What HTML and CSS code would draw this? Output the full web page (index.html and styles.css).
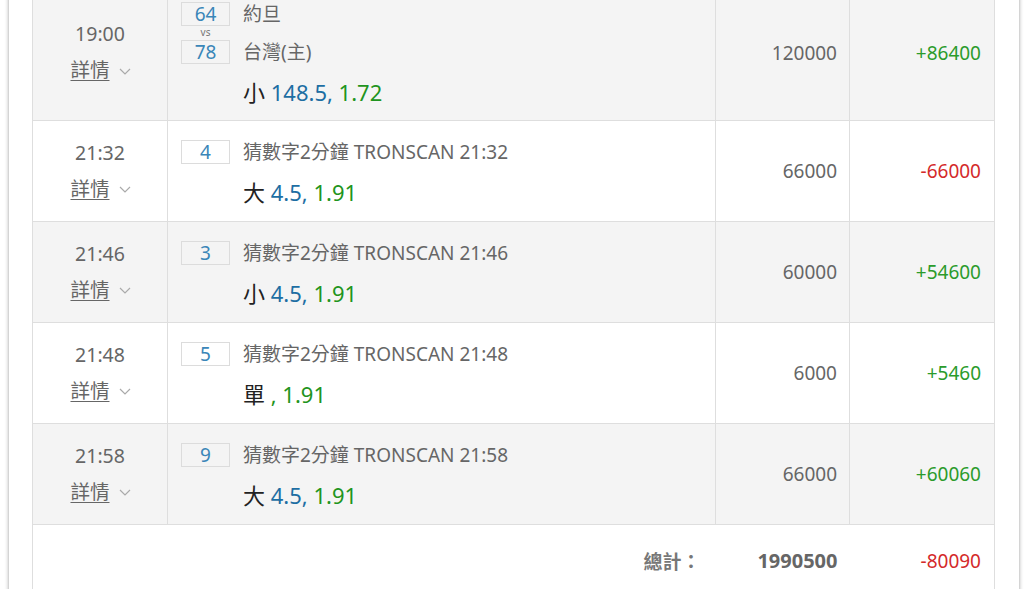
FILE: index.html
```html
<!DOCTYPE html>
<html>
<head>
  <meta charset='UTF-8'>
  <title>投注紀錄</title>
  <link rel="stylesheet" href="styles.css">
</head>
<body>
<div class="panel">
  <table class="bets">
    <colgroup>
      <col class="c-time"><col class="c-match"><col class="c-amount"><col class="c-win">
    </colgroup>
    <tr class="odd tall">
      <td class="time">
        <div class="clock">19:00</div>
        <div class="more"><a>詳情</a><svg width="12" height="7" viewBox="0 0 12 7"><path d="M1 1l5 5 5-5" fill="none" stroke="#aaa" stroke-width="1.2"/></svg></div>
      </td>
      <td class="match">
        <div class="grid">
          <div class="score">64</div><div class="team">約旦</div>
          <div class="vs">vs</div><div></div>
          <div class="score">78</div><div class="team">台灣(主)</div>
          <div></div><div class="pick">小 <span class="line">148.5,</span> <span class="odds">1.72</span></div>
        </div>
      </td>
      <td class="amount">120000</td>
      <td class="win plus">+86400</td>
    </tr>
    <tr>
      <td class="time">
        <div class="clock">21:32</div>
        <div class="more"><a>詳情</a><svg width="12" height="7" viewBox="0 0 12 7"><path d="M1 1l5 5 5-5" fill="none" stroke="#aaa" stroke-width="1.2"/></svg></div>
      </td>
      <td class="match">
        <div class="grid">
          <div class="score">4</div><div class="team">猜數字2分鐘 TRONSCAN 21:32</div>
          <div></div><div class="pick">大 <span class="line">4.5,</span> <span class="odds">1.91</span></div>
        </div>
      </td>
      <td class="amount">66000</td>
      <td class="win minus">-66000</td>
    </tr>
    <tr class="odd">
      <td class="time">
        <div class="clock">21:46</div>
        <div class="more"><a>詳情</a><svg width="12" height="7" viewBox="0 0 12 7"><path d="M1 1l5 5 5-5" fill="none" stroke="#aaa" stroke-width="1.2"/></svg></div>
      </td>
      <td class="match">
        <div class="grid">
          <div class="score">3</div><div class="team">猜數字2分鐘 TRONSCAN 21:46</div>
          <div></div><div class="pick">小 <span class="line">4.5,</span> <span class="odds">1.91</span></div>
        </div>
      </td>
      <td class="amount">60000</td>
      <td class="win plus">+54600</td>
    </tr>
    <tr>
      <td class="time">
        <div class="clock">21:48</div>
        <div class="more"><a>詳情</a><svg width="12" height="7" viewBox="0 0 12 7"><path d="M1 1l5 5 5-5" fill="none" stroke="#aaa" stroke-width="1.2"/></svg></div>
      </td>
      <td class="match">
        <div class="grid">
          <div class="score">5</div><div class="team">猜數字2分鐘 TRONSCAN 21:48</div>
          <div></div><div class="pick">單 <span class="odds">, 1.91</span></div>
        </div>
      </td>
      <td class="amount">6000</td>
      <td class="win plus">+5460</td>
    </tr>
    <tr class="odd">
      <td class="time">
        <div class="clock">21:58</div>
        <div class="more"><a>詳情</a><svg width="12" height="7" viewBox="0 0 12 7"><path d="M1 1l5 5 5-5" fill="none" stroke="#aaa" stroke-width="1.2"/></svg></div>
      </td>
      <td class="match">
        <div class="grid">
          <div class="score">9</div><div class="team">猜數字2分鐘 TRONSCAN 21:58</div>
          <div></div><div class="pick">大 <span class="line">4.5,</span> <span class="odds">1.91</span></div>
        </div>
      </td>
      <td class="amount">66000</td>
      <td class="win plus">+60060</td>
    </tr>
    <tr class="total">
      <td></td>
      <td class="sum-label">總計：</td>
      <td class="sum">1990500</td>
      <td class="win minus">-80090</td>
    </tr>
  </table>
</div>
</body>
</html>
```

FILE: styles.css
```css
body { margin: 0; background: #fff; font-family: "Noto Sans", "Noto Sans CJK TC", sans-serif; color: #666; overflow: hidden; }
.panel { margin: 0 6px 0 8px; padding: 0 23px 20px; border-left: 1px solid #d4d4d4; border-right: 1px solid #d4d4d4; box-shadow: 1px 0 3px rgba(0,0,0,0.12), -1px 0 3px rgba(0,0,0,0.12); }
.bets { width: 963px; margin-top: -16px; border-collapse: collapse; table-layout: fixed; }
.c-time { width: 135px; }
.c-match { width: 548px; }
.c-amount { width: 134px; }
.c-win { width: 145px; }
.bets tr { height: 101px; }
.bets tr.tall { height: 136px; }
.bets td { border: 1px solid #dedede; padding: 0; vertical-align: middle; }
.bets tr.odd td { background: #f4f4f4; }
.time { text-align: center; }
.clock { font-size: 19.5px; line-height: 30px; margin-top: -1px; }
.more { font-size: 19.5px; line-height: 30px; margin-top: 6px; display: flex; justify-content: center; align-items: center; gap: 9px; padding-left: 1px; }
.more a { text-decoration: underline; text-underline-offset: 3px; text-decoration-thickness: 1px; color: #666; }
.more svg { margin-top: 2px; }
.bets td.match { vertical-align: top; padding: 19px 0 0 13px; }
.bets tr.tall td.match { padding-top: 16px; }
.grid { display: grid; grid-template-columns: 49px 1fr; column-gap: 13px; align-items: center; }
.score { height: 22px; line-height: 22px; border: 1px solid #dcdcdc; text-align: center; color: #3a86b8; font-size: 19px; }
.vs { font-size: 10px; line-height: 12px; text-align: center; color: #777; margin-bottom: 2px; }
.team { font-size: 19px; line-height: 24px; color: #666; }
.pick { font-size: 22px; line-height: 28px; margin-top: 14px; color: #222; }
.tall .pick { margin-top: 14px; }
.tall .grid .score:nth-of-type(1) { margin-top: 1px; }
.line { color: #1d6ea3; }
.odds { color: #1f9420; }
.amount { text-align: right; font-size: 19px; padding-right: 12px !important; }
.win { text-align: right; font-size: 19px; padding-right: 13px !important; }
.plus { color: #2b9b2b; }
.minus { color: #d42a2a; }
.bets tr.total { height: 72px; }
.bets tr.total td { border-left: none; border-right: none; border-bottom: none; }
.bets tr.total td:first-child { border-left: 1px solid #dedede; }
.bets tr.total td:last-child { border-right: 1px solid #dedede; }
.sum-label { text-align: right; font-size: 19px; font-weight: bold; color: #777; padding-right: 15px !important; }
.sum { text-align: right; font-size: 20px; font-weight: bold; color: #666; padding-right: 12px !important; }
```
